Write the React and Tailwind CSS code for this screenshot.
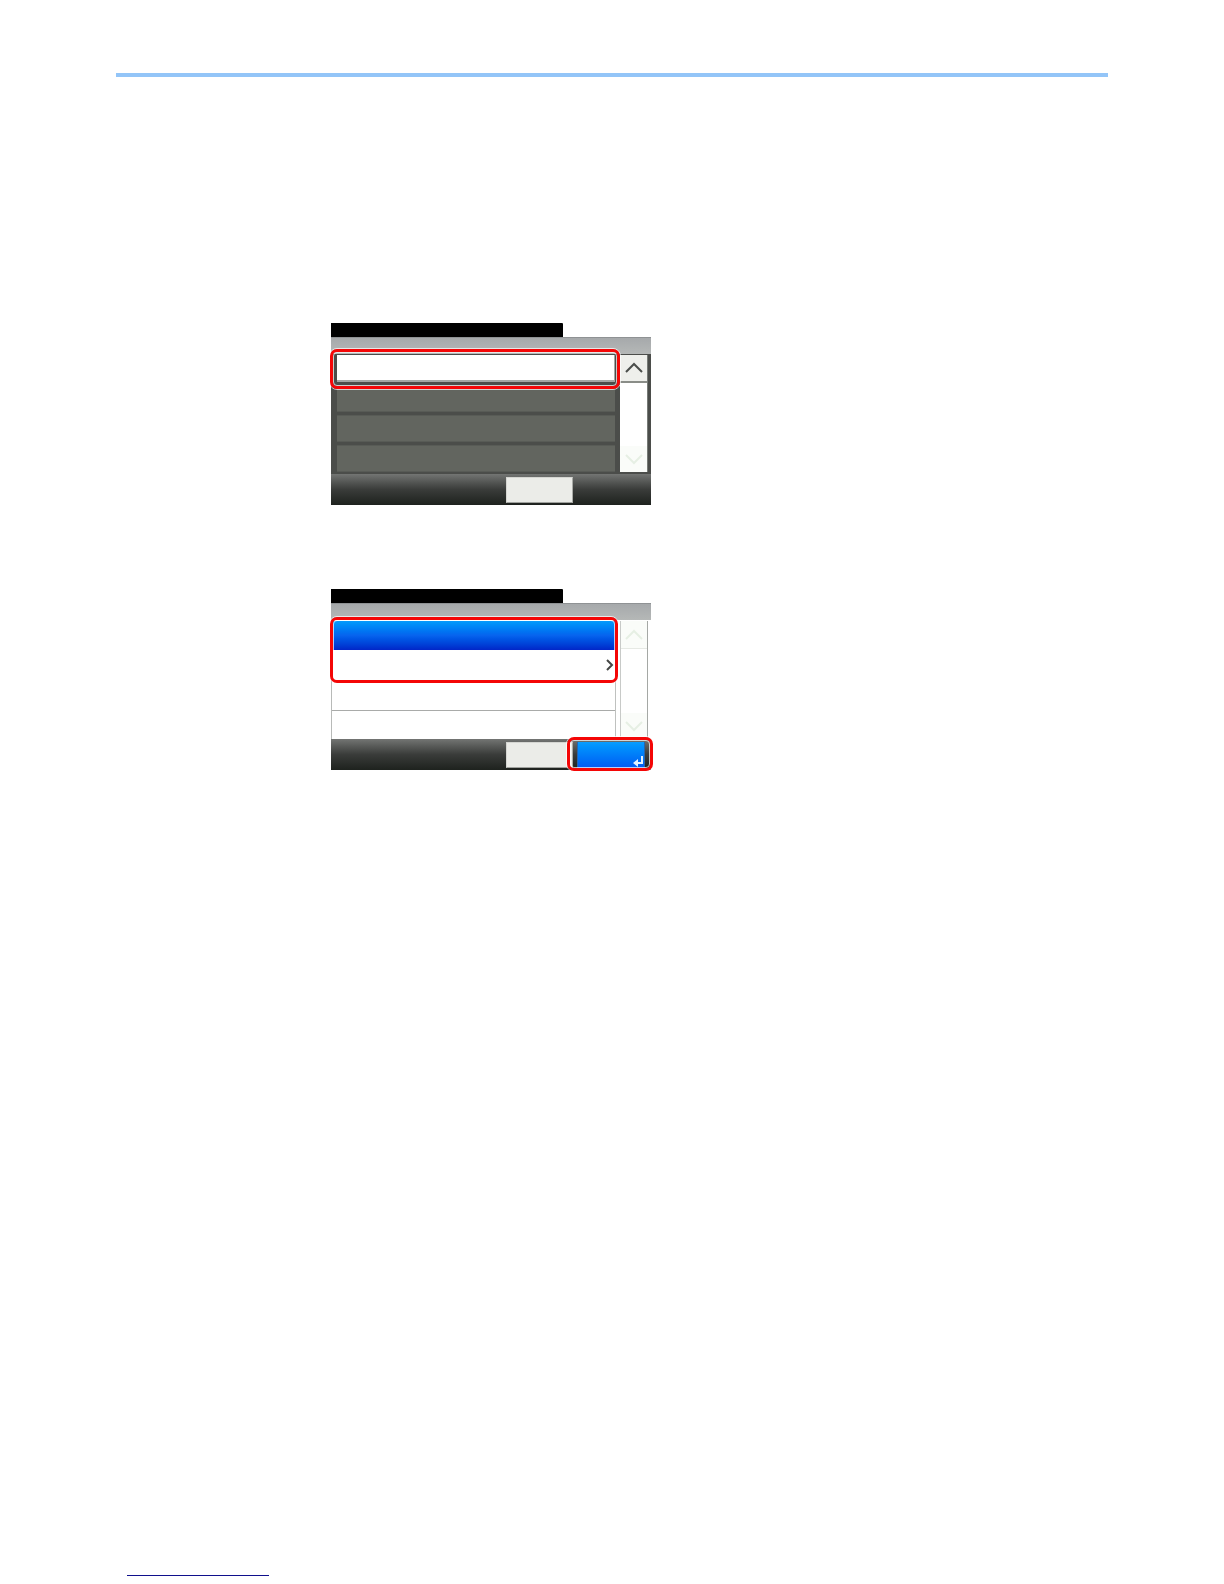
import { clsx } from 'clsx';

function Callout({ className }) {
  return (
    <div
      className={clsx(
        'pointer-events-none absolute rounded-lg border border-white/70',
        className
      )}
    >
      <div className="h-full w-full rounded-[7px] border-[3px] border-[#f40606]">
        <div className="h-full w-full rounded-sm border border-white/70"></div>
      </div>
    </div>
  );
}

function Arrow({ down, faint }) {
  return (
    <svg
      viewBox="0 0 18 12"
      className={clsx('h-3 w-[18px]', down && 'rotate-180')}
      fill="none"
      stroke={faint ? '#e6efe4' : '#4a4d4a'}
      strokeWidth="2"
    >
      <path d="M1 10 L9 2 L17 10" />
    </svg>
  );
}

function ScrollBar({ dark }) {
  return (
    <div
      className={clsx(
        'flex w-7 flex-col justify-between border-r bg-white',
        dark ? 'border-[#777b77]' : 'border-l border-r-[#a5a8a5] border-l-[#c8cac8]'
      )}
    >
      <button
        aria-label="Scroll up"
        className={clsx(
          'flex h-7 items-center justify-center border-b',
          dark ? 'border-b-2 border-[#8a8d88] bg-[#eeefeb]' : 'border-[#e6e9e4] bg-[#fafcf9]'
        )}
      >
        <Arrow faint={!dark} />
      </button>
      <button
        aria-label="Scroll down"
        className="flex h-[26px] items-center justify-center bg-[#fafcf9]"
      >
        <Arrow down faint />
      </button>
    </div>
  );
}

function Panel({ children, footer }) {
  return (
    <section className="relative w-80">
      <div className="h-[14px] w-[232px] rounded-tr-[1px] bg-black"></div>
      <div className="h-[17px] border-t border-[#8f9294] bg-linear-to-b from-[#a6a9ab] to-[#b5b8b7]"></div>
      {children}
      <div className="flex h-[31px] bg-linear-to-b from-[#737573] via-[#3a3c3a] via-50% to-[#1e221e] pt-[3px] pl-[175px]">
        <button
          aria-label="Cancel"
          className="h-[26px] w-[67px] border border-t-[#d5d6d2] border-r-[#a9aba7] border-b-[#a0a29e] border-l-[#d5d6d2] bg-[#ebece8]"
        ></button>
        {footer}
      </div>
    </section>
  );
}

function MenuPanel() {
  return (
    <Panel>
      <div className="flex h-[120px] justify-between bg-[#4b4d4a] pt-px pr-[3px] pb-[2px] pl-[6px]">
        <div className="flex w-[278px] flex-col gap-[3px]">
          <button
            aria-label="Item 1"
            className="h-[27px] border-r border-b-2 border-[#a4a6a3] bg-white"
          ></button>
          {[2, 3, 4].map((n) => (
            <button
              key={n}
              aria-label={`Item ${n}`}
              className="flex-1 border-y border-[#585b56] bg-[#62655f]"
            ></button>
          ))}
        </div>
        <ScrollBar dark />
      </div>
      <Callout className="top-[25px] -left-[2px] h-[42px] w-[292px] rounded-lg" />
    </Panel>
  );
}

function SelectPanel() {
  return (
    <Panel
      footer={
        <button
          aria-label="OK"
          className="ml-1 flex h-[26px] w-[68px] items-end justify-end border-x border-[#2765ad] bg-linear-to-b from-[#0a9dff] to-[#0759f2]"
        >
          <svg viewBox="0 0 12 12" className="h-3 w-3" fill="none" stroke="#e4f3ff" strokeWidth="2">
            <path d="M10 0 V7 H4" />
            <path d="M6 3 L1 7 L6 11 Z" fill="#e4f3ff" stroke="none" />
          </svg>
        </button>
      }
    >
      <div className="flex h-[119px] justify-between border-l border-[#b8bab8] bg-white pt-px pr-[3px]">
        <div className="grid w-[284px] grid-rows-[29px_30px_31px_1fr] border-r border-[#bfc1bf]">
          <button
            aria-label="Option 1"
            className="bg-linear-to-b from-[#059bfc] via-[#0763ee] to-[#0325c8]"
          ></button>
          <button aria-label="Option 2" className="flex items-center justify-end pr-px">
            <svg viewBox="0 0 8 12" className="h-3 w-2" fill="none" stroke="#454745" strokeWidth="2">
              <path d="M1 1 L6 6 L1 11" />
            </svg>
          </button>
          <button aria-label="Option 3" className="border-b border-[#a9aba9]"></button>
          <button aria-label="Option 4"></button>
        </div>
        <ScrollBar />
      </div>
      <Callout className="top-[27px] -left-[2px] h-[68px] w-[290px]" />
      <Callout className="top-[147px] left-[235px] h-9 w-[88px]" />
    </Panel>
  );
}

export default function App() {
  return (
    <div className="flex min-h-screen flex-col bg-white px-[116px] pt-[73px] pb-2 font-['Liberation_Sans',sans-serif]">
      <hr className="h-1 border-0 bg-[#93c5f8]" />
      <main className="mt-[246px] ml-[215px] flex flex-col gap-[84px]">
        <MenuPanel />
        <SelectPanel />
      </main>
      <footer className="mt-auto ml-[11px] flex">
        <a href="#top" aria-label="Back to top" className="block w-[142px] border-b border-[#10108c]"></a>
      </footer>
    </div>
  );
}
